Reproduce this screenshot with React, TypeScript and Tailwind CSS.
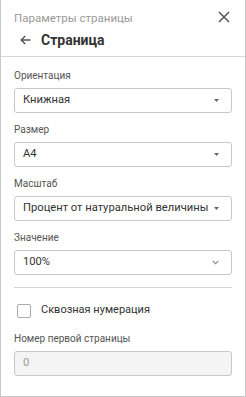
import React from "react";

const Tri = () => (
  <svg width="5" height="3" viewBox="0 0 5 3" className="shrink-0">
    <path d="M0 0 L5 0 L2.5 3 Z" fill="#666" />
  </svg>
);

const Chev = () => (
  <svg width="7" height="5" viewBox="0 0 7 5" className="shrink-0">
    <path d="M0.7 0.8 L3.5 3.6 L6.3 0.8" fill="none" stroke="#888" strokeWidth="1.1" />
  </svg>
);

function Field({ label, value, icon }: { label: string; value: string; icon: React.ReactNode }) {
  return (
    <div className="flex flex-col">
      <div className="text-[10px] leading-[12px] text-[#555] h-[12px] mb-[6px]">{label}</div>
      <div className="h-[25px] border border-[#c8c8c8] rounded-[3px] flex items-center justify-between pl-[8px] pr-[12px] text-[11.2px] text-[#333] whitespace-nowrap">
        <span>{value}</span>
        {icon}
      </div>
    </div>
  );
}

export default function App() {
  return (
    <div className="w-[246px] h-[397px] bg-white border-x border-b border-[#c8c8c8] flex flex-col" style={{ fontFamily: "Roboto, 'Noto Sans', sans-serif" }}>
      <div className="h-[57px] border-b border-[#d6d6d6] flex flex-col px-[13px] pt-[10px] relative">
        <div className="text-[11.5px] leading-[16px] text-[#999]">Параметры страницы</div>
        <div className="flex items-center mt-[4px] h-[20px]">
          <svg width="11" height="10" viewBox="0 0 11 10" className="ml-[6px]">
            <path d="M10.5 5 H1.2 M5.2 1 L1.2 5 L5.2 9" fill="none" stroke="#555" strokeWidth="1.4" />
          </svg>
          <span className="ml-[10px] text-[14px] font-bold text-[#333]">Страница</span>
        </div>
        <svg width="12" height="12" viewBox="0 0 12 12" className="absolute left-[217px] top-[11px]">
          <path d="M1 1 L11 11 M11 1 L1 11" fill="none" stroke="#555" strokeWidth="1.5" />
        </svg>
      </div>
      <div className="flex flex-col px-[13px] pt-[13px] gap-[11px]">
        <Field label="Ориентация" value="Книжная" icon={<Tri />} />
        <Field label="Размер" value="A4" icon={<Tri />} />
        <Field label="Масштаб" value="Процент от натуральной величины" icon={<Tri />} />
        <Field label="Значение" value="100%" icon={<Chev />} />
      </div>
      <div className="mx-[13px] mt-[12px] border-t border-[#d6d6d6]" />
      <div className="flex items-center px-[16px] mt-[15px] h-[15px]">
        <div className="w-[14px] h-[14px] border-[1.5px] border-[#aaa] rounded-[2px]" />
        <span className="ml-[10px] text-[11px] text-[#333]">Сквозная нумерация</span>
      </div>
      <div className="flex flex-col px-[13px] mt-[15px]">
        <div className="text-[10px] leading-[12px] text-[#555] h-[12px] mb-[6px]">Номер первой страницы</div>
        <div className="h-[25px] border border-[#c8c8c8] rounded-[3px] bg-[#f4f4f4] flex items-center pl-[8px] text-[11.2px] text-[#999]">0</div>
      </div>
    </div>
  );
}
